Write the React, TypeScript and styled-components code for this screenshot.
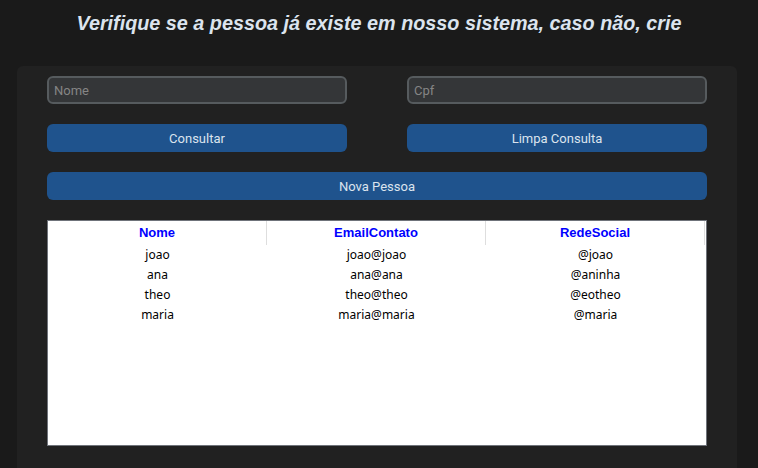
import React from "react";
import styled, { createGlobalStyle } from "styled-components";

const Global = createGlobalStyle`
  html, body { margin: 0; padding: 0; background: #1a1a1a; }
  body { width: 758px; height: 468px; overflow: hidden; }
`;

const Page = styled.div`
  display: flex;
  flex-direction: column;
  align-items: flex-start;
  height: 468px;
`;

const Title = styled.h1`
  align-self: center;
  margin: 0;
  padding-top: 11px;
  height: 24px;
  line-height: 24px;
  font-family: "Liberation Sans", Arial, sans-serif;
  font-size: 19.8px;
  font-weight: bold;
  font-style: italic;
  color: #dce4ee;
`;

const Panel = styled.div`
  margin: 31px 0 0 17px;
  width: 720px;
  flex: 1;
  box-sizing: border-box;
  background: #212121;
  border-radius: 6px 6px 0 0;
  padding: 10px 30px 0 30px;
  display: flex;
  flex-direction: column;
  gap: 20px;
`;

const Row = styled.div`
  display: grid;
  grid-template-columns: 300px 300px;
  column-gap: 60px;
`;

const Input = styled.input`
  box-sizing: border-box;
  height: 28px;
  width: 100%;
  background: #343638;
  border: 2px solid #565b5e;
  border-radius: 6px;
  padding: 0 5px;
  color: #dce4ee;
  font-family: Roboto, sans-serif;
  font-size: 13px;
  outline: none;
  &::placeholder { color: #858585; }
`;

const Button = styled.button<{ $wide?: boolean }>`
  box-sizing: border-box;
  height: 28px;
  width: ${(p) => (p.$wide ? "660px" : "100%")};
  background: #1f538d;
  border: none;
  border-radius: 6px;
  color: #dce4ee;
  font-family: Roboto, sans-serif;
  font-size: 13px;
  padding: 0;
  cursor: pointer;
`;

const Table = styled.div`
  box-sizing: border-box;
  width: 660px;
  height: 226px;
  background: #ffffff;
  border: 1px solid #6f737a;
  display: flex;
  flex-direction: column;
`;

const Grid = styled.div`
  display: grid;
  grid-template-columns: 219px 219px 219px;
`;

const Head = styled.div`
  height: 24px;
  line-height: 24px;
  text-align: center;
  border-right: 1px solid #dedede;
  box-sizing: border-box;
  font-family: "Liberation Sans", Arial, sans-serif;
  font-weight: bold;
  font-size: 13px;
  color: #0000ff;
`;

const Cell = styled.div`
  height: 20px;
  line-height: 20px;
  text-align: center;
  font-family: "Noto Sans", sans-serif;
  font-size: 12px;
  color: #000000;
`;

const rows = [
  ["joao", "joao@joao", "@joao"],
  ["ana", "ana@ana", "@aninha"],
  ["theo", "theo@theo", "@eotheo"],
  ["maria", "maria@maria", "@maria"],
];

export default function App() {
  return (
    <>
      <Global />
      <Page>
        <Title>Verifique se a pessoa já existe em nosso sistema, caso não, crie</Title>
        <Panel>
          <Row>
            <Input placeholder="Nome" />
            <Input placeholder="Cpf" />
          </Row>
          <Row>
            <Button>Consultar</Button>
            <Button>Limpa Consulta</Button>
          </Row>
          <Button $wide>Nova Pessoa</Button>
          <Table>
            <Grid>
              <Head>Nome</Head>
              <Head>EmailContato</Head>
              <Head>RedeSocial</Head>
              {rows.map((r) =>
                r.map((c, i) => <Cell key={r[0] + i}>{c}</Cell>)
              )}
            </Grid>
          </Table>
        </Panel>
      </Page>
    </>
  );
}
